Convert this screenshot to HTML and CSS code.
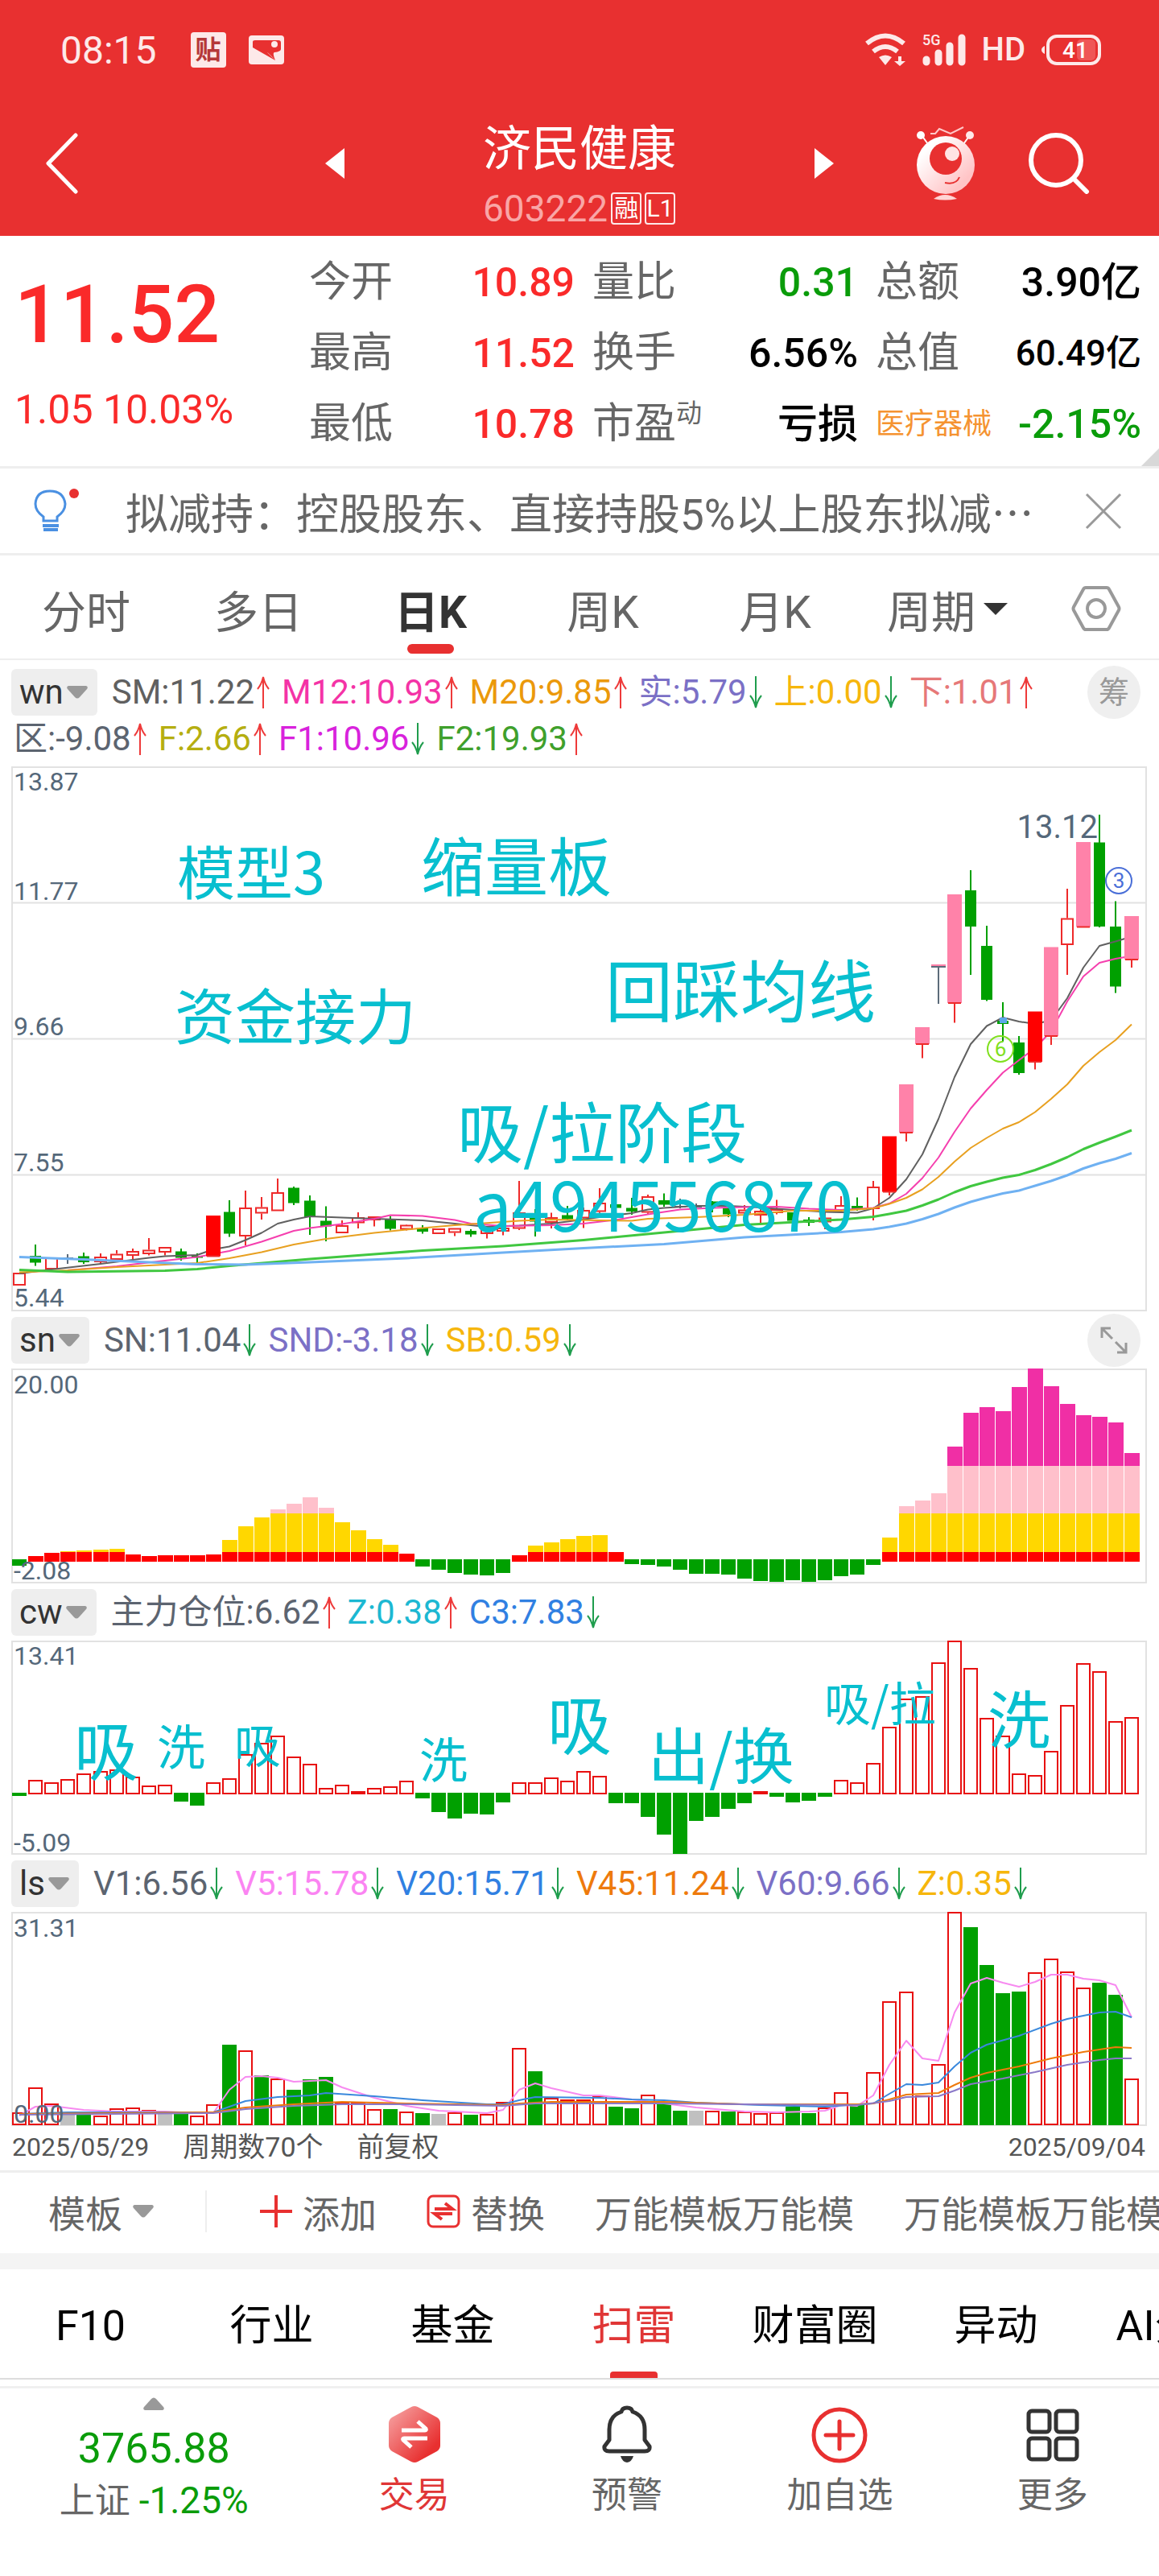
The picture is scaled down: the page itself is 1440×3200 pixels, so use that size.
FILE: index.html
```html
<!DOCTYPE html>
<html lang="zh-CN">
<head>
    <meta charset="UTF-8">
    <meta name="viewport" content="width=device-width, initial-scale=1.0">
    <title>济民健康 603222</title>
    <link rel="stylesheet" href="styles.css">
</head>
<body>

    <!-- shared symbols -->
    <svg class="symbols" aria-hidden="true">
        <symbol id="up" viewBox="0 0 16 42"><path d="M8 41V3M1 17Q6 11 8 2Q10 11 15 17" fill="none" stroke="#ee3a3a" stroke-width="2"/></symbol>
        <symbol id="down" viewBox="0 0 16 42"><path d="M8 1V39M1 25Q6 31 8 40Q10 31 15 25" fill="none" stroke="#1f9d4d" stroke-width="2"/></symbol>
        <symbol id="caret" viewBox="0 0 26 16"><path d="M2 0H24Q27 1 25 4L16 14Q13 17 10 14L1 4Q-1 1 2 0Z" fill="#999"/></symbol>
    </svg>

    <header class="top">
        <div class="status">
            <span class="time">08:15</span>
            <span class="status-app">贴</span>
            <svg class="status-pic" viewBox="0 0 44 36" width="44" height="36"><rect width="44" height="36" rx="4" fill="#fde9e9"/><path d="M5 15Q14 14 22 20L33 31M5 15V8Q5 6 8 6H37Q40 6 40 9V17Q40 20 32 21Q29 21 33 31Q24 20 18 18Q10 15 5 15Z" fill="#e83030"/><circle cx="32" cy="11" r="4" fill="#fde9e9"/></svg>
            <div class="status-right">
                <svg viewBox="0 0 52 42" width="52" height="42"><g fill="none" stroke="#fde9e9" stroke-width="6"><path d="M3 13Q26 -6 49 13"/><path d="M11 23Q26 11 41 23"/></g><path d="M18 30Q26 25 34 30L26 40ZM42 29H46V35H51L44 41L37 35H42Z" fill="#fde9e9"/></svg>
                <svg class="signal" viewBox="0 0 54 42" width="54" height="42"><g fill="none" stroke="#fde9e9" stroke-width="9" stroke-linecap="round"><path d="M5 33V36M20 25V36M34 16V36M49 6V36"/></g><text x="0" y="15" class="net">5G</text></svg>
                <span class="hd">HD</span>
                <svg viewBox="0 0 74 38" width="74" height="38"><rect x="44" y="6" width="23" height="26" rx="5" fill="#ef5656"/><rect x="8" y="2" width="64" height="34" rx="11" fill="none" stroke="#fde9e9" stroke-width="4"/><path d="M4 14V24Q0 22 0 19Q0 16 4 14Z" fill="#fde9e9"/><text x="42" y="29" class="battery">41</text></svg>
            </div>
        </div>
        <div class="title-bar">
            <button class="plain back" aria-label="返回"><svg viewBox="0 0 40 76" width="40" height="76"><path d="M37 3L3 38L37 73" fill="none" stroke="#fff" stroke-width="5" stroke-linecap="round" stroke-linejoin="round"/></svg></button>
            <div class="stock">
                <button class="plain" aria-label="上一只"><svg viewBox="0 0 24 38" width="24" height="38"><path d="M24 0V38L0 19Z" fill="#fff"/></svg></button>
                <div class="stock-name">
                    <h1>济民健康</h1>
                    <p>603222 <span class="tag">融</span> <span class="tag">L1</span></p>
                </div>
                <button class="plain" aria-label="下一只"><svg viewBox="0 0 24 38" width="24" height="38"><path d="M0 0V38L24 19Z" fill="#fff"/></svg></button>
            </div>
            <div class="title-tools">
                <button class="plain" aria-label="助手">
                    <svg viewBox="0 0 74 92" width="74" height="92">
                        <defs><linearGradient id="bot" x1="0" y1="0" x2="1" y2="1"><stop offset="0.2" stop-color="#fff"/><stop offset="0.8" stop-color="#ffc4c6"/></linearGradient></defs>
                        <path d="M7 11L15 22M67 11L59 22" stroke="#fff" stroke-width="2"/>
                        <path d="M18 9H24L29 3L43 9L59 1" fill="none" stroke="#ffc9c9" stroke-width="2"/>
                        <circle cx="6" cy="11" r="5" fill="#fff"/><circle cx="67" cy="11" r="5" fill="#ffe9e9"/>
                        <circle cx="37" cy="48" r="36" fill="url(#bot)"/>
                        <circle cx="37" cy="40" r="20" fill="#e83030"/><circle cx="45" cy="34" r="9" fill="#ffe4e4"/>
                        <path d="M36 70Q50 73 54 63" fill="none" stroke="#e83030" stroke-width="2"/>
                        <path d="M22 90Q36 80 51 90Q36 93 22 90Z" fill="#ffd5d5"/>
                    </svg>
                </button>
                <button class="plain" aria-label="搜索"><svg viewBox="0 0 76 76" width="76" height="76"><circle cx="34" cy="34" r="31" fill="none" stroke="#fff" stroke-width="6"/><path d="M56 57L72 73" stroke="#fff" stroke-width="6" stroke-linecap="round"/></svg></button>
            </div>
        </div>
    </header>

    <section class="quote">
        <div class="price">
            <strong>11.52</strong>
            <span>1.05 10.03%</span>
        </div>
        <dl>
            <div><dt>今开</dt><dd class="red">10.89</dd></div>
            <div><dt>最高</dt><dd class="red">11.52</dd></div>
            <div><dt>最低</dt><dd class="red">10.78</dd></div>
        </dl>
        <dl>
            <div><dt>量比</dt><dd class="green">0.31</dd></div>
            <div><dt>换手</dt><dd>6.56%</dd></div>
            <div><dt>市盈<sup>动</sup></dt><dd>亏损</dd></div>
        </dl>
        <dl>
            <div><dt>总额</dt><dd>3.90亿</dd></div>
            <div><dt>总值</dt><dd class="small">60.49亿</dd></div>
            <div><dt class="sector">医疗器械</dt><dd class="green">-2.15%</dd></div>
        </dl>
        <span class="corner"></span>
    </section>

    <section class="news">
        <svg viewBox="0 0 60 56" width="60" height="56"><path d="M12 40V35Q2 28 2 19Q3 3 20 3Q37 3 39 19Q39 28 29 35V40Z" fill="none" stroke="#4a90e2" stroke-width="3"/><path d="M11 46H31M12 51H30" stroke="#4a90e2" stroke-width="4"/><circle cx="50" cy="6" r="6" fill="#e83030"/></svg>
        <a href="#">拟减持：控股股东、直接持股5%以上股东拟减⋯</a>
        <button class="plain" aria-label="关闭"><svg viewBox="0 0 46 46" width="46" height="46"><path d="M2 2L44 44M44 2L2 44" stroke="#999" stroke-width="3"/></svg></button>
    </section>

    <nav class="periods">
        <button class="plain">分时</button>
        <button class="plain">多日</button>
        <button class="plain active">日K</button>
        <button class="plain">周K</button>
        <button class="plain">月K</button>
        <button class="plain">周期<svg viewBox="0 0 30 15" width="30" height="15"><path d="M0 0H30L15 15Z" fill="#333"/></svg></button>
        <button class="plain settings" aria-label="设置"><svg viewBox="0 0 62 58" width="62" height="58"><path d="M18 3H44Q46 3 47 5L59 27Q60 29 59 31L47 53Q46 55 44 55H18Q16 55 15 53L3 31Q2 29 3 27L15 5Q16 3 18 3Z" fill="none" stroke="#999" stroke-width="4"/><circle cx="31" cy="29" r="11" fill="none" stroke="#999" stroke-width="4"/></svg></button>
    </nav>

    <main class="charts">
        <div class="head head-main">
            <button class="picker">wn<svg><use href="#caret"/></svg></button>
            <span class="m gray">SM:11.22<svg><use href="#up"/></svg></span>
            <span class="m pink">M12:10.93<svg><use href="#up"/></svg></span>
            <span class="m orange">M20:9.85<svg><use href="#up"/></svg></span>
            <span class="m purple">实:5.79<svg><use href="#down"/></svg></span>
            <span class="m yellow">上:0.00<svg><use href="#down"/></svg></span>
            <span class="m salmon">下:1.01<svg><use href="#up"/></svg></span>
            <button class="round">筹</button>
        </div>
        <div class="head head-second">
            <span class="m slate">区:-9.08<svg><use href="#up"/></svg></span>
            <span class="m olive">F:2.66<svg><use href="#up"/></svg></span>
            <span class="m magenta">F1:10.96<svg><use href="#down"/></svg></span>
            <span class="m leaf">F2:19.93<svg><use href="#up"/></svg></span>
        </div>
        <svg id="kline" class="chart" viewBox="14 952 1411 677"></svg>

        <div class="head">
            <button class="picker">sn<svg><use href="#caret"/></svg></button>
            <span class="m slate">SN:11.04<svg><use href="#down"/></svg></span>
            <span class="m purple">SND:-3.18<svg><use href="#down"/></svg></span>
            <span class="m yellow">SB:0.59<svg><use href="#down"/></svg></span>
            <button class="round" aria-label="全屏"><svg viewBox="0 0 34 34" width="34" height="34"><path d="M2 14V2H13M2 2L15 15M32 20V32H21M32 32L19 19" fill="none" stroke="#999" stroke-width="3"/></svg></button>
        </div>
        <svg id="sn" class="chart" viewBox="14 1700 1411 267"></svg>

        <div class="head">
            <button class="picker">cw<svg><use href="#caret"/></svg></button>
            <span class="m slate">主力仓位:6.62<svg><use href="#up"/></svg></span>
            <span class="m cyan">Z:0.38<svg><use href="#up"/></svg></span>
            <span class="m blue">C3:7.83<svg><use href="#down"/></svg></span>
        </div>
        <svg id="cw" class="chart" viewBox="14 2038 1411 266"></svg>

        <div class="head">
            <button class="picker">ls<svg><use href="#caret"/></svg></button>
            <span class="m slate">V1:6.56<svg><use href="#down"/></svg></span>
            <span class="m violet">V5:15.78<svg><use href="#down"/></svg></span>
            <span class="m blue">V20:15.71<svg><use href="#down"/></svg></span>
            <span class="m amber">V45:11.24<svg><use href="#down"/></svg></span>
            <span class="m purple">V60:9.66<svg><use href="#down"/></svg></span>
            <span class="m yellow">Z:0.35<svg><use href="#down"/></svg></span>
        </div>
        <svg id="ls" class="chart" viewBox="14 2375 1411 266"></svg>

        <div class="dates">
            <time>2025/05/29</time>
            <span>周期数70个</span>
            <span>前复权</span>
            <time class="last">2025/09/04</time>
        </div>
    </main>

    <section class="templates">
        <button class="plain choose">模板<svg width="26" height="16"><use href="#caret"/></svg></button>
        <button class="plain"><svg viewBox="0 0 40 40" width="40" height="40"><path d="M20 0V40M0 20H40" stroke="#e83030" stroke-width="4"/></svg>添加</button>
        <button class="plain"><svg viewBox="0 0 42 42" width="42" height="42"><rect x="2" y="2" width="38" height="38" rx="6" fill="none" stroke="#e83030" stroke-width="3"/><path d="M10 18H32L23 11M32 24H10L19 31" fill="none" stroke="#e83030" stroke-width="4"/></svg>替换</button>
        <button class="plain name">万能模板万能模</button>
        <button class="plain name">万能模板万能模</button>
    </section>

    <nav class="sections">
        <a href="#">F10</a>
        <a href="#">行业</a>
        <a href="#">基金</a>
        <a href="#" class="active">扫雷</a>
        <a href="#">财富圈</a>
        <a href="#">异动</a>
        <a href="#">AI分析</a>
    </nav>

    <footer class="bottom">
        <div class="index">
            <svg viewBox="0 0 26 16" width="26" height="16"><path d="M2 16H24Q27 15 25 12L16 2Q13 -1 10 2L1 12Q-1 15 2 16Z" fill="#999"/></svg>
            <strong>3765.88</strong>
            <span>上证 <b>-1.25%</b></span>
        </div>
        <button class="plain trade">
            <svg viewBox="0 0 72 72" width="72" height="72"><defs><linearGradient id="hex" x1="0" y1="0" x2="1" y2="1"><stop offset="0.1" stop-color="#f59a9a"/><stop offset="0.8" stop-color="#e83030"/></linearGradient></defs><path d="M32 2Q36 0 40 2L64 15Q68 18 68 22V50Q68 54 64 57L40 70Q36 72 32 70L8 57Q4 54 4 50V22Q4 18 8 15Z" fill="url(#hex)"/><path d="M20 31H49Q51 31 50 29L40 20M52 41H23Q21 41 22 43L32 52" fill="none" stroke="#fff" stroke-width="5"/></svg>
            交易
        </button>
        <button class="plain">
            <svg viewBox="0 0 72 72" width="72" height="72"><path d="M36 3Q42 3 43 8Q58 13 58 30V43L64 51Q65 57 58 57H14Q7 57 8 51L14 43V30Q14 13 29 8Q30 3 36 3Z" fill="none" stroke="#333" stroke-width="5" stroke-linejoin="round"/><path d="M28 63H44Q42 70 36 71Q30 70 28 63Z" fill="#333"/></svg>
            预警
        </button>
        <button class="plain">
            <svg viewBox="0 0 72 72" width="72" height="72"><circle cx="36" cy="37" r="32" fill="none" stroke="#e83030" stroke-width="5"/><path d="M36 20V54M19 37H53" stroke="#e83030" stroke-width="5" stroke-linecap="round"/></svg>
            加自选
        </button>
        <button class="plain">
            <svg viewBox="0 0 72 72" width="72" height="72"><g fill="none" stroke="#333" stroke-width="5"><rect x="6" y="7" width="26" height="26" rx="4"/><rect x="40" y="7" width="26" height="26" rx="4"/><rect x="6" y="41" width="26" height="26" rx="4"/><rect x="40" y="41" width="26" height="26" rx="4"/></g></svg>
            更多
        </button>
    </footer>

    <script src="charts.js"></script>
</body>
</html>
```
FILE: styles.css
```css
* {
    box-sizing: border-box;
}

body {
    margin: 0;
    font-family: Roboto, "Noto Sans CJK SC", sans-serif;
    background: #fff;
    color: #666;
    overflow-x: hidden;
}

h1, p, dl, dd {
    margin: 0;
    font-weight: 400;
}

a {
    color: inherit;
    text-decoration: none;
}

svg {
    display: block;
    flex: none;
}

.symbols {
    position: absolute;
    width: 0;
    height: 0;
}

.plain {
    border: 0;
    padding: 0;
    background: none;
    font: inherit;
    color: inherit;
    white-space: nowrap;
}

/* header */
.top {
    background: #e83030;
    color: #fff;
}

.status {
    display: flex;
    align-items: center;
    height: 124px;
    padding: 0 72px 0 75px;
    color: #fde9e9;
}

.time {
    font-size: 48px;
}

.status-app {
    margin: 0 28px 0 42px;
    width: 44px;
    border-radius: 4px;
    background: #fde9e9;
    color: #b53838;
    font-size: 32px;
    font-weight: 700;
    line-height: 44px;
    text-align: center;
}

.status-right {
    display: flex;
    align-items: center;
    gap: 20px;
    margin-left: auto;
}

.signal {
    overflow: visible;
}

.hd {
    font-size: 40px;
    font-weight: 500;
    line-height: 44px;
}

.net {
    font-size: 18px;
    font-weight: 500;
    fill: #fde9e9;
}

.battery {
    font-size: 28px;
    font-weight: 500;
    fill: #fff;
    text-anchor: middle;
}

.title-bar {
    display: grid;
    grid-template-columns: 1fr auto 1fr;
    align-items: center;
    height: 169px;
    padding: 0 86px 16px;
}

.back {
    justify-self: start;
    margin-left: -29px;
}

.stock {
    display: flex;
    align-items: center;
    gap: 172px;
}

.stock-name {
    padding-top: 24px;
    text-align: center;
}

.stock-name h1 {
    font-size: 60px;
    line-height: 76px;
}

.stock-name p {
    display: flex;
    align-items: center;
    gap: 4px;
    padding-top: 12px;
    font-size: 46px;
    line-height: 46px;
    color: #f9a6a6;
}

.tag {
    width: 38px;
    border: 2px solid #fde9e9;
    border-radius: 4px;
    color: #fff;
    font-size: 30px;
    line-height: 36px;
}

.title-tools {
    display: flex;
    align-items: center;
    justify-self: end;
    gap: 66px;
}

/* quote */
.quote {
    position: relative;
    display: grid;
    grid-template-columns: 344px 1fr 1fr 1fr;
    gap: 22px;
    height: 289px;
    padding: 14px 22px 0 18px;
    border-bottom: 3px solid #eee;
}

.price {
    color: #fa2a2a;
    white-space: nowrap;
}

.price strong {
    display: block;
    padding-top: 24px;
    font-size: 100px;
    font-weight: 500;
    line-height: 120px;
}

.price span {
    display: block;
    padding-top: 24px;
    font-size: 50px;
    line-height: 68px;
}

.quote dl div {
    display: flex;
    justify-content: space-between;
    line-height: 88px;
    font-size: 52px;
    white-space: nowrap;
}

.quote sup {
    position: relative;
    top: -20px;
    font-size: 32px;
    line-height: 0;
    vertical-align: baseline;
}

.quote dd {
    color: #000;
    font-size: 50px;
    font-weight: 500;
}

.quote .small {
    font-size: 44px;
}

.quote .red {
    color: #fa2a2a;
}

.quote .green {
    color: #0a9c0a;
}

.quote .sector {
    color: #f59331;
    font-size: 36px;
}

.corner {
    position: absolute;
    right: 0;
    bottom: 0;
    border-bottom: 22px solid #d8d8d8;
    border-left: 22px solid transparent;
}

/* news */
.news {
    display: flex;
    align-items: center;
    height: 108px;
    padding: 0 46px 0 42px;
    border-bottom: 3px solid #eee;
    font-size: 53px;
}

.news a {
    flex: 1;
    padding-left: 54px;
    white-space: nowrap;
}

/* period tabs */
.periods {
    display: grid;
    grid-template-columns: repeat(6, 214fr) 156fr;
    height: 130px;
    padding-top: 4px;
    border-bottom: 2px solid #eee;
    font-size: 55px;
}

.periods button {
    position: relative;
    display: flex;
    align-items: center;
    justify-content: center;
    gap: 10px;
}

.periods .active {
    color: #333;
    font-weight: 700;
}

.periods .active::after {
    content: "";
    position: absolute;
    bottom: 6px;
    width: 58px;
    height: 12px;
    border-radius: 6px;
    background: #e83030;
}

/* charts */
.charts {
    padding: 0 15px 0 14px;
}

.chart {
    width: 100%;
    height: auto;
    overflow: visible;
}

.chart text {
    font-size: 32px;
    fill: #55687a;
}

.chart .note {
    fill: #08bfcf;
    font-family: "Noto Sans CJK SC", sans-serif;
}

.head {
    display: flex;
    align-items: center;
    gap: 14px;
    height: 71px;
    font-size: 42px;
    line-height: 58px;
}

.head-main {
    height: 80px;
}

.head-second {
    height: 52px;
    padding: 0 0 16px 3px;
}

.picker {
    display: flex;
    align-items: center;
    gap: 4px;
    height: 58px;
    margin-right: 4px;
    padding: 0 12px 0 10px;
    border: 0;
    border-radius: 6px;
    background: #eee;
    color: #333;
    font: inherit;
}

.picker svg {
    width: 26px;
    height: 16px;
}

.m {
    display: flex;
    align-items: center;
    gap: 2px;
    white-space: nowrap;
}

.m svg {
    width: 18px;
    height: 42px;
}

.gray { color: #606060; }
.slate { color: #5c6470; }
.pink { color: #f433a6; }
.orange { color: #eb990b; }
.purple { color: #7b70c6; }
.yellow { color: #f6b60c; }
.salmon { color: #e67878; }
.olive { color: #b5ae10; }
.magenta { color: #d822dc; }
.leaf { color: #3fa02c; }
.cyan { color: #1cb8d2; }
.blue { color: #3080e2; }
.violet { color: #fb84f2; }
.amber { color: #ee7a0c; }

.round {
    display: flex;
    align-items: center;
    justify-content: center;
    width: 66px;
    height: 66px;
    margin: 0 8px 0 auto;
    padding: 0;
    border: 0;
    border-radius: 50%;
    background: #efefef;
    color: #999;
    font: inherit;
    font-size: 38px;
}

.dates {
    display: flex;
    gap: 42px;
    height: 55px;
    padding: 4px 2px 0 1px;
    color: #555;
    font-size: 34px;
    line-height: 44px;
}

.dates time {
    font-size: 32px;
}

.dates .last {
    margin-left: auto;
}

/* templates */
.templates {
    display: flex;
    align-items: center;
    height: 103px;
    padding: 0 0 4px 60px;
    border-top: 3px solid #eee;
    font-size: 46px;
    overflow: hidden;
}

.templates button {
    display: flex;
    align-items: center;
    flex: none;
    gap: 13px;
    margin-right: 62px;
}

.templates .choose {
    height: 52px;
    margin-right: 66px;
    padding-right: 64px;
    border-right: 2px solid #eee;
}

/* section tabs */
.sections {
    display: flex;
    height: 157px;
    border-top: 20px solid #f4f4f4;
    border-bottom: 2px solid #ddd;
    color: #000;
    font-size: 52px;
    line-height: 142px;
    overflow: hidden;
}

.sections a {
    position: relative;
    flex: 0 0 225px;
    height: 135px;
    text-align: center;
}

.sections .active {
    color: #e03636;
}

.sections .active::after {
    content: "";
    position: absolute;
    left: 83px;
    bottom: 0;
    width: 59px;
    height: 8px;
    border-radius: 4px 4px 0 0;
    background: #e83030;
}

/* bottom bar */
.bottom {
    display: grid;
    grid-template-columns: 382fr repeat(4, 264fr);
    margin-top: 8px;
    border-top: 3px solid #f0f0f0;
    font-size: 44px;
    line-height: 56px;
}

.bottom button,
.index {
    display: flex;
    flex-direction: column;
    align-items: center;
}

.bottom button {
    gap: 12px;
    padding-top: 21px;
}

.index {
    padding-top: 11px;
    white-space: nowrap;
}

.index strong {
    padding-top: 20px;
    color: #0a9c0a;
    font-size: 52px;
    font-weight: 400;
}

.index span {
    padding-top: 8px;
}

.index b {
    color: #0a9c0a;
    font-size: 46px;
    font-weight: 400;
}

.bottom .trade {
    color: #e03636;
}
```
FILE: charts.js
```js
const GREEN = "#00a000";
const RED = "#ee2a2a";

const cx = i => Math.round(24.4 + 20.02 * i);

function rect(x, y, w, h, fill) {
    return `<rect x="${x}" y="${y}" width="${w}" height="${h}" fill="${fill}"/>`;
}

function box(x, y, w, h, color, stroke) {
    return `<rect x="${x + stroke / 2}" y="${y + stroke / 2}" width="${w - stroke}" height="${Math.max(h - stroke, 1)}" fill="#fff" stroke="${color}" stroke-width="${stroke}"/>`;
}

function vline(x, y1, y2, color) {
    return `<path d="M${x} ${y1}V${y2}" stroke="${color}" stroke-width="2"/>`;
}

// points: [index, y, index, y, ...]
function line(points, color, width) {
    let d = "";
    for (let k = 0; k < points.length; k += 2) {
        d += (k ? "L" : "M") + cx(points[k]) + " " + points[k + 1];
    }
    return `<path d="${d}" fill="none" stroke="${color}" stroke-width="${width}" stroke-linejoin="round"/>`;
}

function frame(y1, y2) {
    return `<rect x="15" y="${y1}" width="1409" height="${y2 - y1}" fill="none" stroke="#e2e2e2" stroke-width="2"/>`;
}

function label(y, text, x = 17) {
    return `<text x="${x}" y="${y}">${text}</text>`;
}

function note(x, y, size, text) {
    return `<text class="note" x="${x}" y="${y}" style="font-size:${size}px">${text}</text>`;
}

// [type, body top, body bottom, high, low]
// r hollow, g green, d doji, R solid red, P pink
const candles = [
    ["r", 1581, 1597, 1581, 1597], ["g", 1560, 1568.5, 1546, 1572.5], ["r", 1562, 1577, 1562, 1577], ["d", 1562, 1562, 1558, 1570],
    ["g", 1560.5, 1568, 1556, 1570], ["r", 1561, 1568, 1557, 1570], ["r", 1557.5, 1565, 1553, 1565], ["r", 1554, 1560, 1551, 1564],
    ["r", 1552.5, 1558, 1538, 1559.5], ["r", 1549, 1556, 1549, 1559.5], ["g", 1554.5, 1562.5, 1551, 1566], ["g", 1560, 1562.5, 1557, 1569],
    ["R", 1510, 1560.5, 1510, 1560.5], ["g", 1505.5, 1532.5, 1491, 1536.5], ["r", 1500, 1536, 1479, 1547], ["r", 1499.5, 1507.5, 1487, 1515],
    ["r", 1481, 1504.5, 1464, 1504.5], ["g", 1475.5, 1494.5, 1474, 1497], ["g", 1491.5, 1512, 1485, 1534], ["g", 1516.5, 1523.5, 1498.5, 1542],
    ["r", 1522, 1532, 1516, 1532], ["r", 1512, 1519.5, 1506, 1526], ["r", 1511, 1516, 1511, 1523.5], ["g", 1514.5, 1526.5, 1510.5, 1528.5],
    ["r", 1521.5, 1527.5, 1521, 1528.5], ["g", 1525.5, 1530, 1522, 1532.5], ["r", 1526, 1533, 1526, 1533], ["r", 1525.5, 1531.5, 1525.5, 1535.5],
    ["g", 1529, 1533.5, 1527, 1536.5], ["r", 1526.5, 1533, 1526.5, 1538.5], ["r", 1525, 1530, 1525, 1534.5], ["r", 1506, 1526.5, 1467, 1528],
    ["g", 1508.5, 1517.5, 1502, 1536], ["r", 1512, 1519, 1506.5, 1526], ["g", 1509.5, 1514.5, 1498, 1516], ["r", 1503, 1513.5, 1500, 1525.5],
    ["r", 1494, 1505.5, 1476, 1509], ["g", 1496, 1500.5, 1494, 1502], ["g", 1500.5, 1505, 1488, 1509], ["r", 1486, 1506.5, 1484, 1508],
    ["g", 1491, 1496.5, 1482.5, 1499], ["d", 1498, 1498, 1489, 1501], ["d", 1498, 1498, 1495, 1501], ["g", 1492.5, 1497, 1492, 1506],
    ["g", 1501, 1508.5, 1501, 1512], ["r", 1502.5, 1507.5, 1497, 1508], ["r", 1504, 1510, 1502, 1519], ["r", 1502, 1507, 1490.5, 1508.5],
    ["g", 1506, 1516.5, 1506, 1516.5], ["g", 1515, 1519, 1512, 1523], ["r", 1512.5, 1518.5, 1505, 1527], ["r", 1497, 1504, 1486, 1505],
    ["g", 1498, 1503, 1487.5, 1504], ["r", 1474, 1502, 1467, 1516], ["R", 1411.5, 1480.5, 1411.5, 1485], ["P", 1347, 1407, 1347, 1418],
    ["P", 1276, 1297, 1276, 1314.5], ["T", 1198, 1201, 1198, 1247], ["P", 1111, 1246, 1111, 1270.5], ["g", 1106, 1151, 1081, 1211],
    ["g", 1175, 1242, 1150, 1243.5], ["g", 1268, 1272, 1245, 1294], ["g", 1295, 1333, 1287, 1335], ["R", 1256.5, 1319, 1256.5, 1328.5],
    ["P", 1176.5, 1287, 1176.5, 1298], ["r", 1140.5, 1174, 1104, 1211], ["P", 1046, 1151.5, 1046, 1151.5], ["g", 1046.5, 1151, 1012, 1152],
    ["g", 1151, 1225.5, 1119.5, 1233.5], ["P", 1138, 1192, 1138, 1202]
];

function drawKline() {
    let under = frame(953, 1628);
    [1121.5, 1290.5, 1459.5].forEach(y => {
        under += `<path d="M15 ${y}H1424" stroke="#e2e2e2" stroke-width="2"/>`;
    });
    let over = "";
    candles.forEach(([type, top, bottom, high, low], i) => {
        const x = cx(i);
        if (type === "r") {
            under += vline(x, high, top, RED) + vline(x, bottom, low, RED) + box(x - 8, top, 16, bottom - top, RED, 2);
        } else if (type === "g") {
            under += vline(x, high, low, GREEN) + rect(x - 7, top, 14, bottom - top, GREEN);
        } else if (type === "d") {
            under += vline(x, high, low, "#5c6b7a") + rect(x - 7, top, 14, 2, "#5c6b7a");
        } else if (type === "T") {
            over += vline(x, top, low, "#5c6b7a") + rect(x - 9, top, 18, 2, "#ff82a9") + rect(x - 9, top + 2, 18, 2, "#5c6b7a");
        } else {
            over += vline(x, bottom, low, RED) + rect(x - 9, top, 18, bottom - top, type === "R" ? "#ff0000" : "#ff82a9") + rect(x - 8, bottom - 1, 16, 2, RED);
        }
    });
    const lines =
        line([0, 1582, 2, 1577, 5, 1570, 8, 1562.5, 9, 1560.5, 11, 1559, 12, 1552, 13, 1548.5, 14, 1540.5, 15, 1531.5, 16, 1520, 17, 1515, 18, 1511, 20, 1512.5, 22, 1514, 25, 1516, 27, 1520, 29, 1524, 31, 1522.5, 33, 1520, 34, 1517.5, 36, 1512, 38, 1507, 39, 1502.5, 40, 1500.5, 42, 1498, 44, 1498, 46, 1500, 48, 1503, 50, 1505.5, 52, 1506.5, 53, 1501, 54, 1488, 55, 1465, 56, 1434, 57, 1390, 58, 1338, 59, 1297, 60, 1274.5, 61, 1264, 62, 1269, 63, 1272, 64, 1267.5, 65, 1240, 66, 1202, 67, 1175, 68, 1169.5, 69, 1163.5], "#606060", 2) +
        line([3, 1578, 6, 1573, 9, 1566, 11, 1561.5, 13, 1554, 15, 1542.5, 17, 1529, 18, 1525.5, 20, 1520.5, 22, 1514, 23, 1509.5, 25, 1510.5, 27, 1515.5, 28, 1520, 30, 1523, 33, 1522, 35, 1520, 37, 1515.5, 39, 1508.5, 41, 1502.5, 43, 1500.5, 45, 1499.5, 47, 1499, 49, 1501.5, 51, 1503, 53, 1500.5, 54, 1495, 55, 1483, 56, 1463.5, 57, 1438, 58, 1406, 59, 1377, 60, 1354, 61, 1332.5, 62, 1317, 63, 1302, 64, 1281, 65, 1244, 66, 1213, 67, 1196, 68, 1191, 69, 1187.5], "#f53fae", 2) +
        line([0, 1580.5, 3, 1578, 6, 1574, 9, 1571, 11, 1569, 13, 1563, 15, 1555.5, 17, 1546, 19, 1539, 22, 1531.5, 25, 1525.5, 27, 1522, 31, 1516.5, 33, 1515, 36, 1516, 38, 1516.5, 39, 1514, 42, 1512, 45, 1509, 48, 1504, 51, 1504, 53, 1501, 54, 1495.5, 55, 1488, 56, 1477.5, 57, 1462, 58, 1443, 59, 1426, 60, 1413.5, 61, 1402, 62, 1394, 63, 1381.5, 64, 1365, 65, 1347, 66, 1324, 67, 1307, 68, 1292, 69, 1272.5], "#e8a020", 2) +
        line([0, 1577.5, 3, 1580, 9, 1578.5, 11, 1576.5, 13, 1572.5, 18, 1564, 22, 1558, 25, 1553.5, 30, 1548, 35, 1540.5, 40, 1531, 45, 1521.5, 51, 1515, 53, 1511.5, 54, 1508, 55, 1504, 56, 1497.5, 57, 1490, 58, 1481, 59, 1473.5, 60, 1468, 61, 1463, 62, 1459.5, 63, 1453.5, 64, 1446, 65, 1437.5, 66, 1427.5, 67, 1419.5, 68, 1412, 69, 1404], "#40c740", 3) +
        line([0, 1561.5, 4, 1564.5, 8, 1568, 11, 1570.5, 14, 1571, 18, 1568, 24, 1563, 30, 1556, 35, 1550.5, 40, 1545.5, 45, 1537, 51, 1530.5, 53, 1527, 54, 1524, 55, 1520, 56, 1514.5, 57, 1508, 58, 1500, 59, 1493, 60, 1487.5, 61, 1482.5, 62, 1479, 63, 1473, 64, 1467, 65, 1460, 66, 1451.5, 67, 1445, 68, 1439.5, 69, 1432.5], "#6fb1f2", 3);
    const marks =
        rect(1242, 1264, 9, 7, "#5ca8e8") +
        `<text x="1364" y="1041" text-anchor="end" style="font-size:40px">13.12</text>` +
        `<g fill="none" stroke-width="2"><circle cx="1390" cy="1094" r="16" stroke="#4a6fd8"/><circle cx="1243" cy="1303" r="16" stroke="#80e01e"/></g>` +
        `<text x="1390" y="1103" text-anchor="middle" style="font-size:26px;fill:#4a6fd8">3</text>` +
        `<text x="1243" y="1312" text-anchor="middle" style="font-size:26px;fill:#80e01e">6</text>`;
    const axis = label(982, "13.87") + label(1118, "11.77") + label(1286, "9.66") + label(1455, "7.55") + label(1623, "5.44");
    const notes =
        note(220, 1111, 72, "模型3") + note(523, 1107, 79, "缩量板") + note(217, 1291, 75, "资金接力") +
        note(752, 1263, 84, "回踩均线") + note(568, 1438, 82, "吸/拉阶段") + note(588, 1530, 85, "a494556870");
    document.getElementById("kline").innerHTML = under + lines + over + marks + axis + notes;
}

const snBars = [
    -8, 7, 11, 13, 14, 15, 16, 9, 7, 8, 8, 8, 9, 27, 44, 55, 65, 72, 80, 67, 49, 39, 28, 21, 10, -9, -13, -17, -19, -20, -17, 8, 20, 24, 28,
    32, 33, 12, -6, -7, -9, -13, -18, -18, -19, -24, -27, -28, -26, -28, -26, -21, -19, -7, 30, 69, 76, 85, 143, 185, 192, 187, 217, 240, 218, 196, 182, 180, 173, 135
];

// each band is drawn from its lower level up to the bar's height
const bands = [[0, 12, "#ff0000"], [12, 60, "#ffd700"], [60, 119, "#ffc0cb"], [119, 240, "#f02fa5"]];

function drawSn() {
    let out = frame(1701, 1966);
    snBars.forEach((h, i) => {
        const x = cx(i) - 9;
        if (h < 0) {
            out += rect(x, 1937, 18, -h, GREEN);
            return;
        }
        bands.forEach(([from, to, color]) => {
            if (h > from) {
                const top = Math.min(h, to);
                out += rect(x, 1940 - top, 19, top - from, color);
            }
        });
    });
    out += label(1731, "20.00") + label(1962, "-2.08");
    document.getElementById("sn").innerHTML = out;
}

const cwBars = [
    -4, 18, 15, 19, 26, 29, 31, 22, 11, 12, -11, -16, 15, 20, 50, 64, 73, 47, 38, 8, 12, 4, 8, 10, 17, -7, -24, -32, -26, -27, -12, 15, 15, 21, 17,
    29, 23, -13, -13, -30, -52, -76, -35, -30, -20, -13, 4, -5, -12, -10, -5, 18, 15, 39, 84, 119, 122, 164, 191, 157, 95, 73, 26, 24, 54, 111, 163, 153, 91, 96
];

function drawCw() {
    let out = frame(2039, 2303);
    cwBars.forEach((h, i) => {
        const x = cx(i) - 9;
        out += h < 0 ? rect(x, 2227, 18, -h, GREEN) : box(x, 2229 - h, 18, h, "#e81010", 2);
    });
    out += label(2068, "13.41") + label(2300, "-5.09");
    out +=
        note(92, 2205, 80, "吸") + note(195, 2193, 60, "洗") + note(291, 2190, 58, "吸") + note(521, 2209, 60, "洗") +
        note(680, 2173, 80, "吸") + note(805, 2210, 76, "出/换") + note(1024, 2138, 58, "吸/拉") + note(1227, 2166, 78, "洗");
    document.getElementById("cw").innerHTML = out;
}

const volumes = [
    "r16", "r47", "r27", "n15", "g13", "r12", "r21", "r22", "r19", "n15", "g14", "r12", "r26", "g100", "r93", "g62", "r58", "g44", "g57", "g60",
    "r28", "r28", "r20", "g20", "r17", "g15", "n14", "r16", "g13", "r14", "r29", "r96", "g67", "r34", "r32", "r32", "r37", "g23", "g21", "r38",
    "g27", "g18", "n18", "r18", "g17", "r17", "r15", "r16", "g23", "g15", "r22", "r41", "g25", "r66", "r154", "r166", "r37", "r76", "r265", "g246",
    "g199", "g164", "g166", "r190", "r207", "r191", "r171", "g177", "g162", "r58"
];

function drawLs() {
    let out = frame(2376, 2640);
    volumes.forEach((v, i) => {
        const x = cx(i) - 9;
        const h = Number(v.slice(1));
        if (v[0] === "r") {
            out += box(x, 2640 - h, 18, h, "#e81010", 2);
        } else {
            out += rect(x, 2640 - h, 18, h, v[0] === "g" ? GREEN : "#c0c0c0");
        }
    });
    out += line([0, 2628, 1, 2617, 2, 2616, 4, 2621, 6, 2623, 9, 2623, 11, 2625, 12, 2625, 13, 2596, 14, 2580, 15, 2579, 16, 2581, 17, 2586, 19, 2584, 20, 2593, 22, 2606, 24, 2616, 26, 2622, 29, 2625, 30, 2621, 31, 2596, 32, 2588, 33, 2594, 35, 2603, 36, 2603, 38, 2608, 40, 2613, 42, 2618, 45, 2623, 47, 2624, 49, 2623, 50, 2622, 51, 2615, 52, 2616, 53, 2603, 54, 2565, 55, 2535, 56, 2557, 57, 2560, 58, 2500, 59, 2464, 60, 2457, 61, 2463, 62, 2468, 63, 2462, 64, 2453, 65, 2453, 66, 2458, 67, 2460, 68, 2466, 69, 2506], "#f78af0", 2);
    out += line([0, 2626, 3, 2624, 12, 2624, 13, 2617, 14, 2610, 16, 2605, 18, 2603, 19, 2600, 22, 2604, 25, 2609, 29, 2614, 30, 2614, 31, 2609, 32, 2605, 36, 2606, 38, 2608, 40, 2609, 42, 2612, 46, 2615, 50, 2617, 53, 2613, 54, 2601, 55, 2589, 56, 2590, 57, 2587, 58, 2567, 59, 2550, 60, 2540, 62, 2529, 64, 2514, 65, 2508, 66, 2504, 67, 2500, 68, 2499, 69, 2506], "#3a88dc", 2);
    out += line([0, 2626, 12, 2624, 14, 2618, 17, 2614, 20, 2611, 24, 2613, 30, 2615, 31, 2613, 33, 2611, 40, 2611, 45, 2614, 52, 2614, 53, 2613, 54, 2608, 55, 2602, 57, 2600, 58, 2590, 59, 2581, 60, 2575, 62, 2567, 64, 2557, 66, 2549, 68, 2543, 69, 2544], "#ee7a0c", 2);
    out += line([0, 2627, 12, 2625, 14, 2620, 17, 2616, 20, 2614, 24, 2614, 30, 2616, 32, 2613, 40, 2613, 45, 2614, 52, 2615, 54, 2610, 55, 2605, 57, 2604, 58, 2597, 59, 2589, 61, 2582, 63, 2574, 65, 2565, 67, 2559, 68, 2557, 69, 2557], "#8a78c8", 2);
    out += label(2406, "31.31") + label(2637, "0.00");
    document.getElementById("ls").innerHTML = out;
}

drawKline();
drawSn();
drawCw();
drawLs();
```
